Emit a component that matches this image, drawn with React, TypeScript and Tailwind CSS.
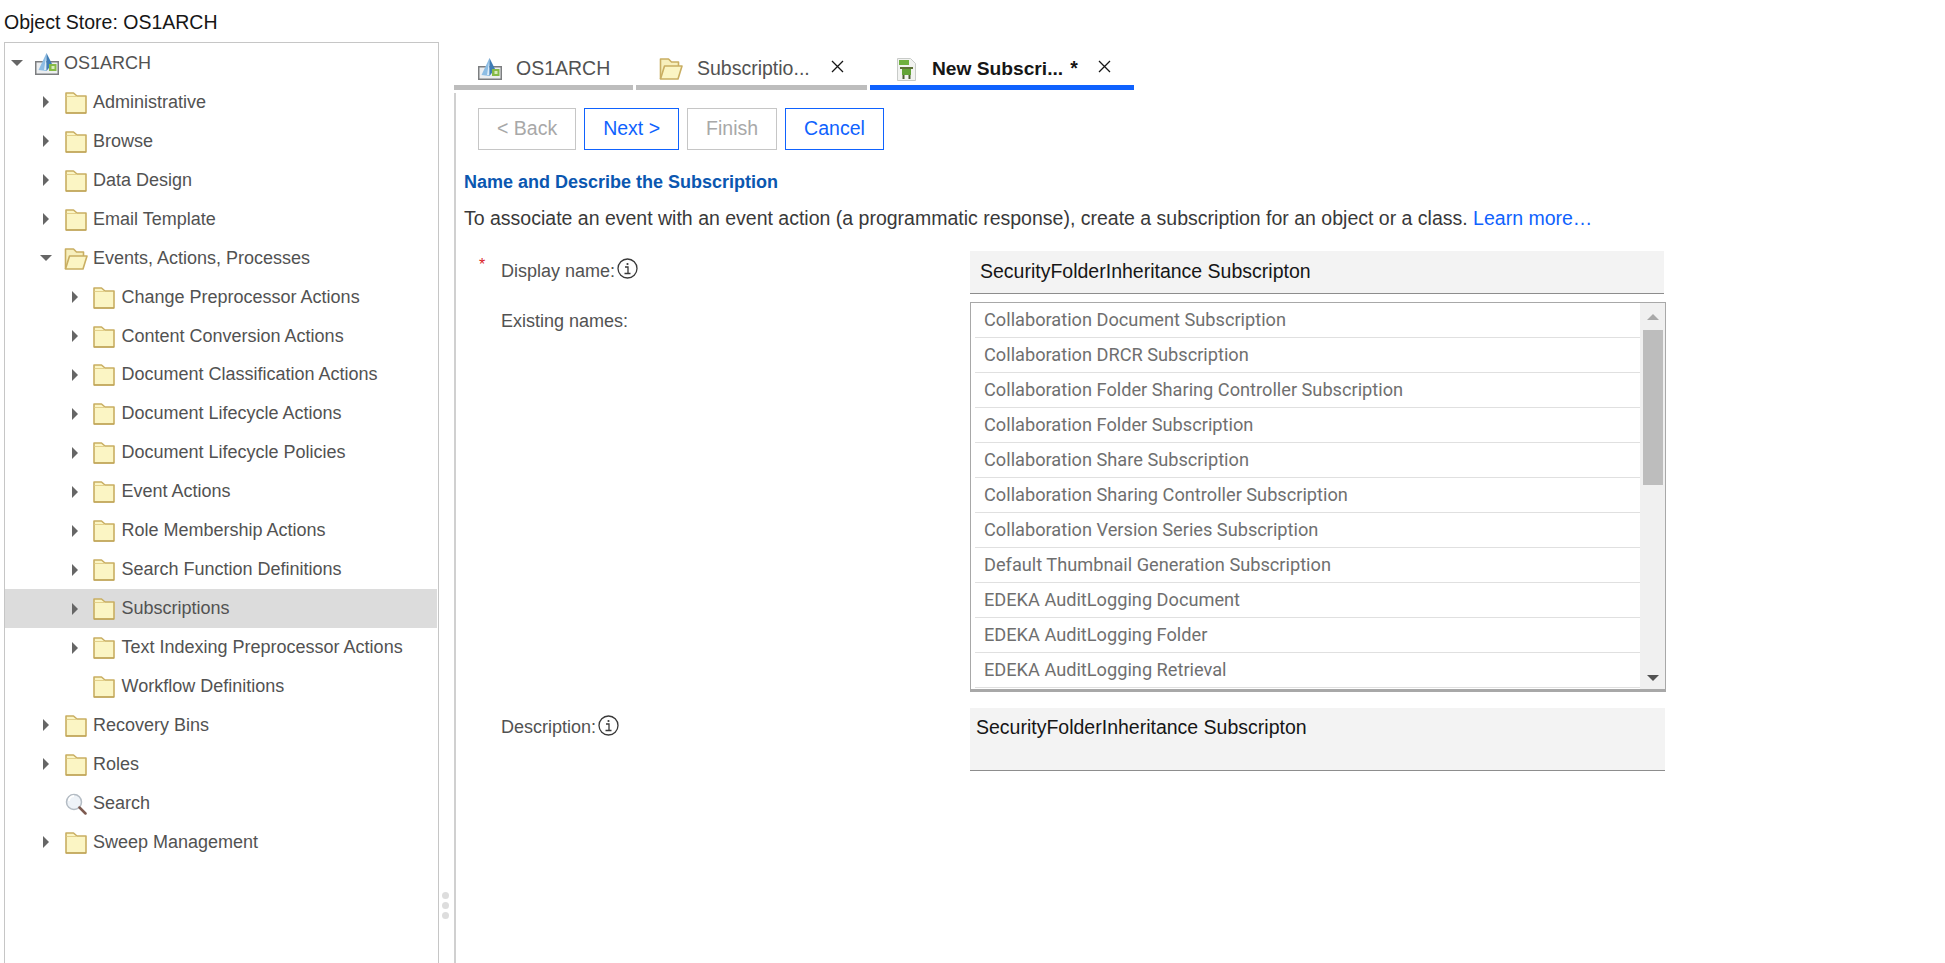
type TreeNode = { label: string; depth: 0 | 1 | 2; arrow?: "right" | "down"; icon?: "store" | "folder" | "open" | "search"; selected?: boolean };

const indent = ["pl-0", "pl-[29px]", "pl-[57.5px]"];

const tree: TreeNode[] = [
  { label: "OS1ARCH", depth: 0, arrow: "down", icon: "store" },
  { label: "Administrative", depth: 1, arrow: "right" },
  { label: "Browse", depth: 1, arrow: "right" },
  { label: "Data Design", depth: 1, arrow: "right" },
  { label: "Email Template", depth: 1, arrow: "right" },
  { label: "Events, Actions, Processes", depth: 1, arrow: "down", icon: "open" },
  { label: "Change Preprocessor Actions", depth: 2, arrow: "right" },
  { label: "Content Conversion Actions", depth: 2, arrow: "right" },
  { label: "Document Classification Actions", depth: 2, arrow: "right" },
  { label: "Document Lifecycle Actions", depth: 2, arrow: "right" },
  { label: "Document Lifecycle Policies", depth: 2, arrow: "right" },
  { label: "Event Actions", depth: 2, arrow: "right" },
  { label: "Role Membership Actions", depth: 2, arrow: "right" },
  { label: "Search Function Definitions", depth: 2, arrow: "right" },
  { label: "Subscriptions", depth: 2, arrow: "right", selected: true },
  { label: "Text Indexing Preprocessor Actions", depth: 2, arrow: "right" },
  { label: "Workflow Definitions", depth: 2 },
  { label: "Recovery Bins", depth: 1, arrow: "right" },
  { label: "Roles", depth: 1, arrow: "right" },
  { label: "Search", depth: 1, icon: "search" },
  { label: "Sweep Management", depth: 1, arrow: "right" },
];

const existingNames = [
  "Collaboration Document Subscription",
  "Collaboration DRCR Subscription",
  "Collaboration Folder Sharing Controller Subscription",
  "Collaboration Folder Subscription",
  "Collaboration Share Subscription",
  "Collaboration Sharing Controller Subscription",
  "Collaboration Version Series Subscription",
  "Default Thumbnail Generation Subscription",
  "EDEKA AuditLogging Document",
  "EDEKA AuditLogging Folder",
  "EDEKA AuditLogging Retrieval",
];

function FolderIcon() {
  return (
    <svg width="22" height="22" viewBox="0 0 22 22">
      <path d="M1 1h7.500l3.500 3h9v17H1z" fill="#fbf5c4" stroke="#c9ae62" strokeWidth="1.600" strokeLinejoin="round" />
      <path d="M1.500 4.500h10" stroke="#e3d08a" strokeWidth="1" />
      <path d="M1 21h20" stroke="#b89c4e" strokeWidth="1" />
    </svg>
  );
}

function OpenFolderIcon() {
  return (
    <svg width="24" height="22" viewBox="0 0 24 22">
      <path d="M1.500 21V1h8l3 3h7v4" fill="#f7efbc" stroke="#c9ae62" strokeWidth="1.600" strokeLinejoin="round" />
      <path d="M1.500 21l4-13h17.500l-4 13z" fill="#fbf5c4" stroke="#c9ae62" strokeWidth="1.600" strokeLinejoin="round" />
    </svg>
  );
}

function StoreIcon() {
  return (
    <svg width="24" height="22" viewBox="0 0 24 22">
      <path d="M0.750 8.750h22.500v12.500H0.750z" fill="#eceef0" stroke="#7c7e80" strokeWidth="1.500" />
      <path d="M11.500 0L3.500 17l8 1z" fill="#8dbde4" />
      <path d="M11 4l-2 13h2z" fill="#dcebf7" />
      <path d="M11.500 0l5.500 11-5.500 7z" fill="#3f7db5" />
      <rect x="14" y="11" width="7.500" height="7" fill="#86bb46" />
      <rect x="16.500" y="13" width="3" height="3" fill="#d9ecbd" />
    </svg>
  );
}

function NewSubscriptionIcon() {
  return (
    <svg width="19" height="23" viewBox="0 0 19 23">
      <path d="M0.500 0.500h13l5 5v17h-18z" fill="#f2f3f1" stroke="#c8cbc8" />
      <rect x="2" y="2" width="10" height="5" fill="#6fb03f" />
      <rect x="3" y="9" width="13" height="2" fill="#5e7238" />
      <path d="M5 11h9v6H5z" fill="#62a336" />
      <path d="M5.500 17h2v4h-2zM11.500 17h2v4h-2z" fill="#4d5f33" />
    </svg>
  );
}

function SearchIcon() {
  return (
    <svg width="22" height="22" viewBox="0 0 22 22">
      <circle cx="9" cy="9" r="7.500" fill="#eef3f8" stroke="#b4bcc4" strokeWidth="1.500" />
      <path d="M4 8a5 5 0 0 1 5-5" stroke="#ffffff" strokeWidth="2" fill="none" />
      <path d="M14.500 14.500L20.500 20.500" stroke="#7d5a50" strokeWidth="2.500" strokeLinecap="round" />
    </svg>
  );
}

function InfoIcon() {
  return (
    <svg className="ml-[2px] shrink-0" width="21" height="21" viewBox="0 0 21 21">
      <circle cx="10.500" cy="10.500" r="9.500" fill="none" stroke="#393939" strokeWidth="1.300" />
      <path d="M8 9h3v6M7.500 15.500h6" fill="none" stroke="#393939" strokeWidth="1.300" />
      <circle cx="10.500" cy="6" r="1.100" fill="#393939" />
    </svg>
  );
}

function CloseIcon() {
  return (
    <svg width="13" height="13" viewBox="0 0 13 13">
      <path d="M1 1l11 11M12 1L1 12" stroke="#161616" strokeWidth="1.300" />
    </svg>
  );
}

function TreeRow({ node }: { node: TreeNode }) {
  const icon = node.icon ?? "folder";
  return (
    <div className={`flex h-[38.95px] items-center ${indent[node.depth]} ${node.selected ? "bg-[#dcdcdc]" : ""}`}>
      <span className="flex w-[24px] shrink-0 justify-center">
        {node.arrow === "right" && <span className="h-0 w-0 border-y-[6px] border-l-[6px] border-y-transparent border-l-[#666666]" />}
        {node.arrow === "down" && <span className="h-0 w-0 border-x-[6px] border-t-[6px] border-x-transparent border-t-[#666666]" />}
      </span>
      <span className="ml-[5px] mt-[1px] flex w-[25px] shrink-0 justify-center">
        {icon === "store" && <StoreIcon />}
        {icon === "folder" && <FolderIcon />}
        {icon === "open" && <OpenFolderIcon />}
        {icon === "search" && <SearchIcon />}
      </span>
      <span className="ml-[5px] whitespace-nowrap text-[#525252]">{node.label}</span>
    </div>
  );
}

function WizardButton({ label, enabled }: { label: string; enabled?: boolean }) {
  const tone = enabled ? "border-[#0f62fe] text-[#0f62fe]" : "border-[#c6c6c6] text-[#a8a8a8]";
  return <button className={`h-[42px] border px-[18px] text-[19.5px] ${tone}`}>{label}</button>;
}

export default function App() {
  return (
    <div className="flex h-[963px] w-[1945px] flex-col overflow-hidden bg-white font-['Liberation_Sans',Arial,sans-serif] text-[18px] text-[#161616]">
      <div className="flex h-[42px] shrink-0 items-center pl-[4px] pt-[3px] text-[19.5px]">Object Store: OS1ARCH</div>
      <div className="flex min-h-0 flex-1">
        <aside className="ml-[4px] w-[435px] shrink-0 border-x border-t border-[#c6c6c6] pr-px pt-[1px]">
          {tree.map((node) => (
            <TreeRow key={node.label} node={node} />
          ))}
        </aside>
        <div className="flex w-[15px] shrink-0 flex-col items-center justify-end gap-[3px] pb-[44px] pr-[3px]">
          <span className="size-[7px] rounded-full bg-[#dddddd]" />
          <span className="size-[7px] rounded-full bg-[#dddddd]" />
          <span className="size-[7px] rounded-full bg-[#dddddd]" />
        </div>
        <main className="flex min-w-0 flex-1 flex-col">
          <div className="flex h-[48px] shrink-0 gap-[3px] text-[19.5px]">
            <div className="flex w-[179px] items-center border-b-[5px] border-[#bdbdbd] pl-[24px] pt-[11px] text-[#525252]">
              <StoreIcon />
              <span className="ml-[14px]">OS1ARCH</span>
            </div>
            <div className="flex w-[231px] items-center border-b-[5px] border-[#bdbdbd] pl-[23px] pt-[11px] text-[#525252]">
              <OpenFolderIcon />
              <span className="ml-[14px]">Subscriptio...</span>
              <span className="mb-[5px] ml-[21px]"><CloseIcon /></span>
            </div>
            <div className="flex w-[264px] items-center border-b-[5px] border-[#0f62fe] pl-[27px] pt-[11px] font-bold text-[#161616]">
              <NewSubscriptionIcon />
              <span className="ml-[16px] text-[19.2px]">New Subscri...</span>
              <span className="ml-[7px]">*</span>
              <span className="mb-[5px] ml-[20px]"><CloseIcon /></span>
            </div>
          </div>
          <div className="mt-[3px] flex-1 border-l-2 border-[#d0d0d0] pl-[8px]">
            <div className="flex gap-[8px] pl-[14px] pt-[15px]">
              <WizardButton label="< Back" />
              <WizardButton label="Next >" enabled />
              <WizardButton label="Finish" />
              <WizardButton label="Cancel" enabled />
            </div>
            <h2 className="mt-[21px] text-[18px] font-bold leading-[22px] text-[#0b57b0]">Name and Describe the Subscription</h2>
            <p className="mt-[13px] text-[19.5px] leading-[24px] text-[#393939]">
              To associate an event with an event action (a programmatic response), create a subscription for an object or a class. <span className="text-[#0f62fe]">Learn more…</span>
            </p>
            <div className="mt-[21px] flex">
              <div className="flex w-[506px] shrink-0 pl-[15px] pt-[7px]">
                <span className="w-[22px] text-[16px] leading-[14px] text-[#da1e28]">*</span>
                <span className="pt-px leading-[24px] text-[#525252]">Display name:</span>
                <InfoIcon />
              </div>
              <div className="flex h-[43px] w-[694px] items-center border-b border-[#8d8d8d] bg-[#f3f3f3] pl-[10px] text-[19.5px]">SecurityFolderInheritance Subscripton</div>
            </div>
            <div className="mt-[8px] flex">
              <div className="w-[506px] shrink-0 pl-[37px] pt-[7px] leading-[24px] text-[#525252]">Existing names:</div>
              <div className="flex h-[390px] w-[696px] border border-b-[3px] border-[#a8a8a8] pl-[4px]">
                <ul className="min-w-0 flex-1 overflow-hidden font-['Roboto',sans-serif] text-[18.2px] text-[#6f6f6f]">
                  {existingNames.map((name) => (
                    <li key={name} className="flex h-[35px] items-center border-b border-[#e0e0e0] pl-[9px]">{name}</li>
                  ))}
                </ul>
                <div className="flex w-[25px] shrink-0 flex-col items-center bg-[#f0f0f0]">
                  <span className="mt-[11px] h-0 w-0 border-x-[6px] border-b-[6px] border-x-transparent border-b-[#a8a8a8]" />
                  <span className="mt-[10px] h-[155px] w-[20px] bg-[#bdbdbd]" />
                  <span className="mt-auto mb-[8px] h-0 w-0 border-x-[6px] border-t-[6px] border-x-transparent border-t-[#525252]" />
                </div>
              </div>
            </div>
            <div className="mt-[16px] flex">
              <div className="flex w-[506px] shrink-0 items-start pl-[37px] pt-[7px]">
                <span className="leading-[24px] text-[#525252]">Description:</span>
                <InfoIcon />
              </div>
              <div className="h-[63px] w-[695px] border-b border-[#8d8d8d] bg-[#f3f3f3] pl-[6px] pt-[7px] text-[19.5px] leading-[24px]">SecurityFolderInheritance Subscripton</div>
            </div>
          </div>
        </main>
      </div>
    </div>
  );
}
